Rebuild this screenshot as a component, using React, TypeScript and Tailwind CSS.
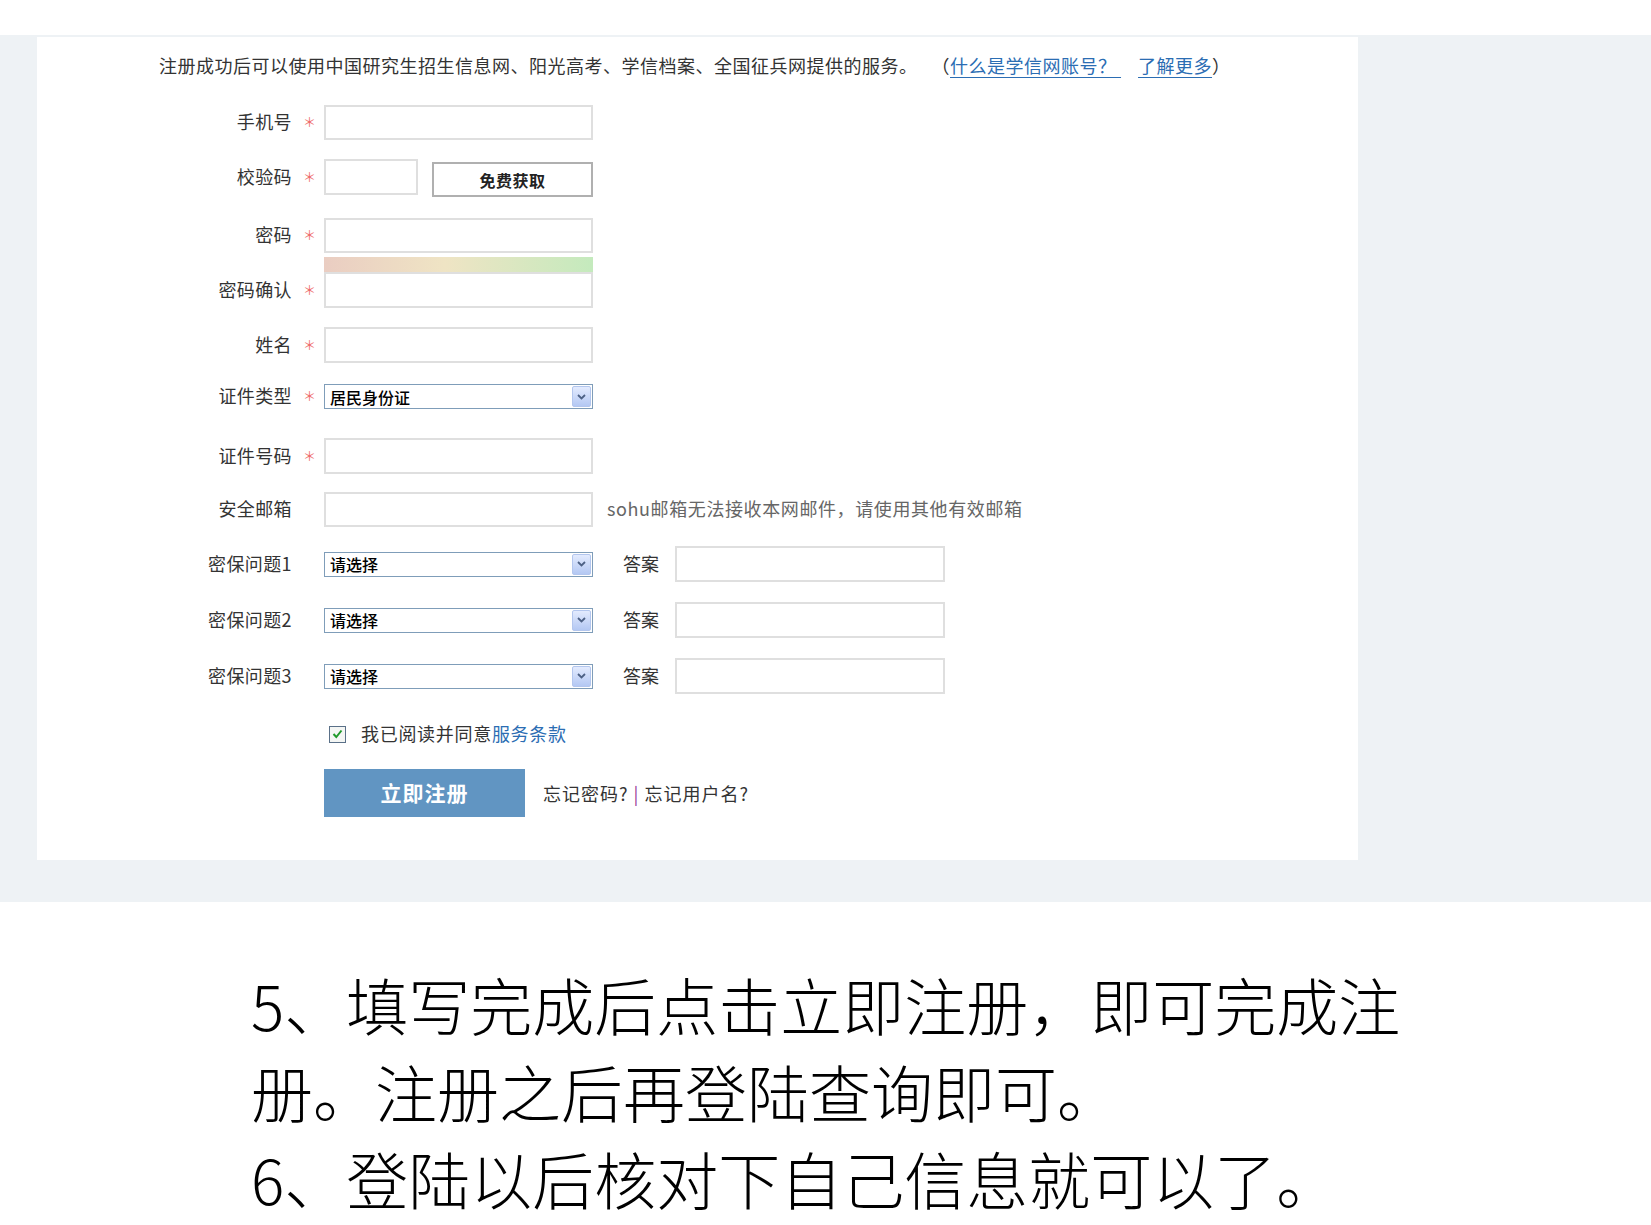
import React from 'react';

interface LabelProps {
  text: string;
  required?: boolean;
  h?: string;
}

const Label: React.FC<LabelProps> = ({ text, required, h = 'h-[36px]' }) => (
  <>
    <div className={`w-[110px] ${h} flex items-center justify-end pb-[3px] text-[18px] tracking-[0.4px] text-[#333] leading-[24px]`}>
      {text}
    </div>
    <div className={`w-[32px] ${h} flex items-center pl-[11px] pb-[2px] text-[13px] text-[#ee6a6a] leading-none`}>
      {required ? '＊' : ''}
    </div>
  </>
);

const TextBox: React.FC<{ w?: string; h?: string }> = ({ w = 'w-[269px]', h = 'h-[36px]' }) => (
  <div className={`${w} ${h} border-2 border-[#dfdfdf] bg-white`} />
);

const Select: React.FC<{ value: string }> = ({ value }) => (
  <div className="w-[269px] h-[25px] border border-[#7f9db9] bg-white flex items-center justify-between pl-[5px] pr-[1px]">
    <span className="text-[16px] font-medium text-black leading-none">{value}</span>
    <div className="w-[19px] h-[21px] rounded-[2px] border border-[#b3c6ee] bg-linear-to-b from-[#e3ebfe] to-[#b4c8f3] flex items-center justify-center">
      <svg width="9" height="6" viewBox="0 0 9 6">
        <path d="M1 1 L4.5 4.5 L8 1" stroke="#4d6185" strokeWidth="1.8" fill="none" />
      </svg>
    </div>
  </div>
);

const QuestionRow: React.FC<{ n: number; mt: string }> = ({ n, mt }) => (
  <div className={`flex items-center ${mt}`}>
    <Label text={`密保问题${n}`} />
    <Select value="请选择" />
    <div className="ml-[30px] pb-[3px] text-[18px] text-[#333] leading-[24px]">答案</div>
    <div className="ml-[16px]">
      <TextBox w="w-[270px]" />
    </div>
  </div>
);

export default function App() {
  return (
    <div className="w-[1651px] h-[1225px] bg-white overflow-hidden font-['Noto_Sans_CJK_SC',sans-serif] [text-spacing-trim:space-all]">
      <div className="h-[35px]" />
      <div className="bg-[#eef2f5] pt-[2px] pb-[42px] pl-[37px]">
        <div className="w-[1321px] bg-white pt-[16px] pb-[43px]">
          <p className="pl-[122px] text-[18px] leading-[24px] tracking-[0.5px] text-[#333]">
            注册成功后可以使用中国研究生招生信息网、阳光高考、学信档案、全国征兵网提供的服务。
            <span className="inline-block w-[14px]" />（
            <a className="text-[#2b6db3] underline underline-offset-[4px]">什么是学信网账号？&nbsp;</a>
            <span className="inline-block w-[17px]" />
            <a className="text-[#2b6db3] underline underline-offset-[4px]">了解更多</a>）
          </p>

          <div className="pl-[145px] mt-[28px]">
            <div className="flex items-center">
              <Label text="手机号" required h="h-[35px]" />
              <TextBox h="h-[35px]" />
            </div>

            <div className="flex items-start mt-[19px]">
              <Label text="校验码" required />
              <TextBox w="w-[94px]" />
              <div className="ml-[14px] mt-[3px] w-[161px] h-[35px] border-2 border-[#b0b0b0] bg-white flex items-center justify-center text-[16px] tracking-[0.5px] font-bold text-[#222]">
                免费获取
              </div>
            </div>

            <div className="flex items-center mt-[21px]">
              <Label text="密码" required h="h-[35px]" />
              <TextBox h="h-[35px]" />
            </div>

            <div className="flex items-end mt-[4px]">
              <Label text="密码确认" required />
              <div className="flex flex-col">
                <div className="w-[269px] h-[15px] bg-[linear-gradient(to_right,#eacdc2,#efe4c4_45%,#c4eabd)]" />
                <TextBox />
              </div>
            </div>

            <div className="flex items-center mt-[19px]">
              <Label text="姓名" required />
              <TextBox />
            </div>

            <div className="flex items-center mt-[21px]">
              <Label text="证件类型" required h="h-[25px]" />
              <Select value="居民身份证" />
            </div>

            <div className="flex items-center mt-[29px]">
              <Label text="证件号码" required />
              <TextBox />
            </div>

            <div className="flex items-center mt-[18px]">
              <Label text="安全邮箱" h="h-[35px]" />
              <TextBox h="h-[35px]" />
              <span className="ml-[14px] pb-[3px] text-[18px] tracking-[0.6px] text-[#666] leading-[24px]">
                sohu邮箱无法接收本网邮件，请使用其他有效邮箱
              </span>
            </div>

            <QuestionRow n={1} mt="mt-[19px]" />
            <QuestionRow n={2} mt="mt-[20px]" />
            <QuestionRow n={3} mt="mt-[20px]" />

            <div className="flex items-center h-[24px] mt-[28px]">
              <div className="w-[142px]" />
              <div className="ml-[5px] w-[17px] h-[17px] border border-[#5a7088] bg-[#f4f6f4] flex items-center justify-center">
                <svg width="11" height="10" viewBox="0 0 11 10">
                  <path d="M1.5 5 L4.3 8 L9.5 1.5" stroke="#1f9a2a" strokeWidth="2" fill="none" />
                </svg>
              </div>
              <span className="ml-[15px] pb-[3px] text-[18px] tracking-[0.7px] text-[#333] leading-[24px]">
                我已阅读并同意<a className="text-[#2b6db3]">服务条款</a>
              </span>
            </div>

            <div className="flex items-center mt-[23px]">
              <div className="w-[142px]" />
              <div className="w-[201px] h-[48px] bg-[#6195c2] flex items-center justify-center text-white text-[21px] font-bold tracking-[1px]">
                立即注册
              </div>
              <span className="ml-[18px] text-[18px] tracking-[1px] text-[#333] leading-[24px] whitespace-pre">
                忘记密码? <span className="text-[#9a3a9a]">|</span> 忘记用户名?
              </span>
            </div>
          </div>
        </div>
      </div>

      <div className="mt-[59px] ml-[251px] w-[1180px] text-[62px] leading-[87px] text-black font-light">
        <p>5、填写完成后点击立即注册，即可完成注册。注册之后再登陆查询即可。</p>
        <p>6、登陆以后核对下自己信息就可以了。</p>
      </div>
    </div>
  );
}
